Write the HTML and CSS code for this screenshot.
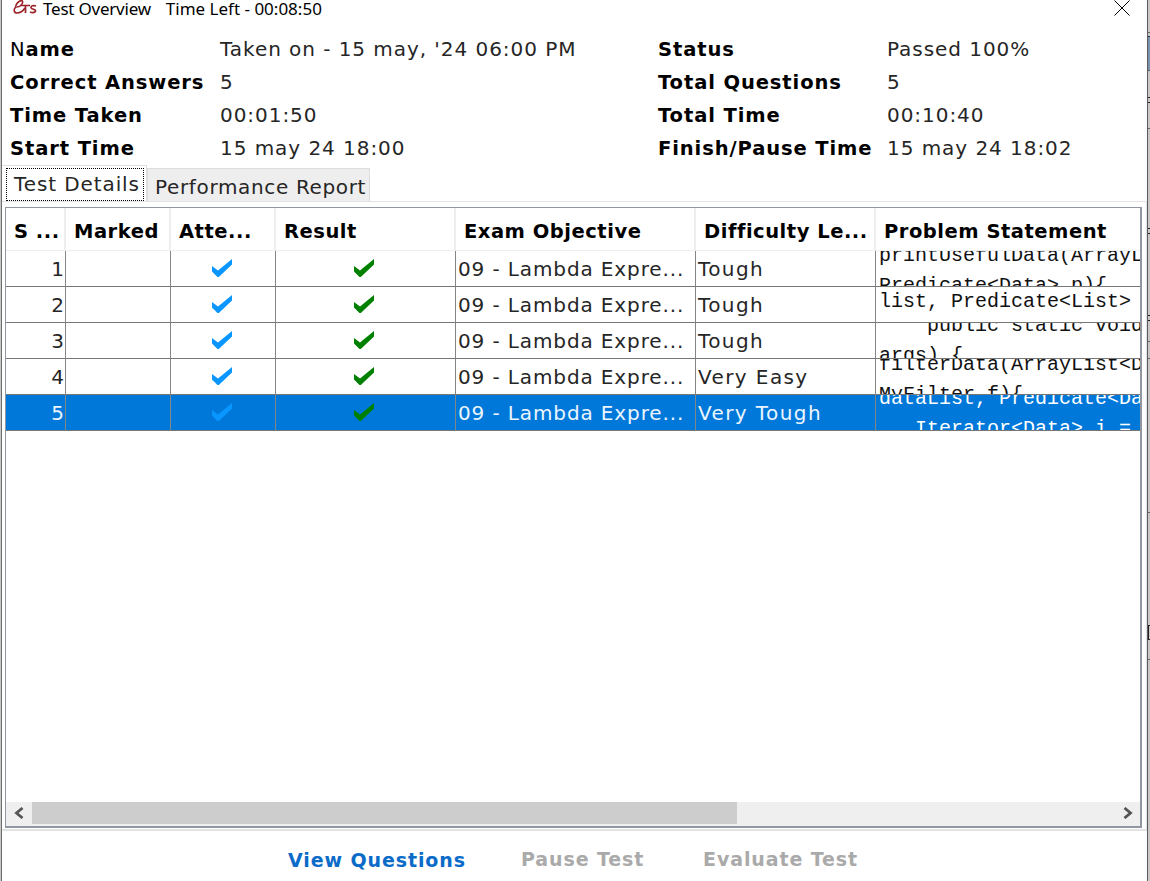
FILE: index.html
```
<!DOCTYPE html>
<html lang="en">
<head>
<meta charset="utf-8">
<title>Test Overview</title>
<link rel="stylesheet" href="styles.css">
</head>
<body>
<svg width="0" height="0" class="defs" aria-hidden="true"><symbol id="check" viewBox="0 0 20 18"><path d="M0 7 6 11.6 20 0V5.6L6.8 18H5.5L0 12.5z"/></symbol></svg>
<div class="desktop">
  <div class="edge left"></div>
  <div class="window">
    <header class="titlebar">
      <svg class="logo" width="24" height="16" viewBox="0 0 24 16" fill="none" stroke="#9b2226"><path stroke-width="1.6" d="M4 7C8 7 11 2 9 .8 6 0 2 5 3 7c-3 2-2 6 1 6 3 0 6-2 8-5"/><path stroke-width="1.7" d="M8 5.5h9M12.5 5.5V13M23 6c-3-1-5 0-5 1.5C18 9.500 23 9 22.500 11 22 13 19 12.800 17 12"/></svg>
      <h1 class="title">Test Overview</h1><span class="timer">Time Left - 00:08:50</span>
      <svg class="close" width="16" height="16" viewBox="0 0 16 16" stroke="#000" fill="none"><path d="M.5.5l15 15M15.500.5l-15 15"/></svg>
    </header>
    <section class="summary">
      <b><span class="thin">N</span>ame</b><span>Taken on - 15 may, '24 06:00 PM</span><b>Status</b><span>Passed 100%</span>
      <b>Correct Answers</b><span>5</span><b>Total Questions</b><span>5</span>
      <b>Time Taken</b><span>00:01:50</span><b>Total Time</b><span>00:10:40</span>
      <b>Start Time</b><span>15 may 24 18:00</span><b>Finish/Pause Time</b><span>15 may 24 18:02</span>
    </section>
    <nav class="tabs"><div class="tab active"><span>Test Details</span></div><div class="tab"><span>Performance Report</span></div></nav>
    <main class="pane">
      <div class="frame">
        <div class="row head"><div>S ...</div><div>Marked</div><div>Atte...</div><div>Result</div><div>Exam Objective</div><div>Difficulty Le...</div><div>Problem Statement</div></div>
        <div class="row"><div class="num">1</div><div></div><div class="mark blue"><svg><use href="#check"/></svg></div><div class="mark green"><svg><use href="#check"/></svg></div><div>09 - Lambda Expre...</div><div class="level">Tough</div><div class="code"><pre class="r1">printUsefulData(ArrayList
Predicate&lt;Data&gt; p){</pre></div></div>
        <div class="row"><div class="num">2</div><div></div><div class="mark blue"><svg><use href="#check"/></svg></div><div class="mark green"><svg><use href="#check"/></svg></div><div>09 - Lambda Expre...</div><div class="level">Tough</div><div class="code"><pre class="r2">list, Predicate&lt;List&gt;</pre></div></div>
        <div class="row"><div class="num">3</div><div></div><div class="mark blue"><svg><use href="#check"/></svg></div><div class="mark green"><svg><use href="#check"/></svg></div><div>09 - Lambda Expre...</div><div class="level">Tough</div><div class="code"><pre class="r3">    public static void
args) {</pre></div></div>
        <div class="row"><div class="num">4</div><div></div><div class="mark blue"><svg><use href="#check"/></svg></div><div class="mark green"><svg><use href="#check"/></svg></div><div>09 - Lambda Expre...</div><div class="level">Very Easy</div><div class="code"><pre class="r4">filterData(ArrayList&lt;Data
MyFilter f){</pre></div></div>
        <div class="row selected"><div class="num">5</div><div></div><div class="mark blue"><svg><use href="#check"/></svg></div><div class="mark green"><svg><use href="#check"/></svg></div><div>09 - Lambda Expre...</div><div class="level">Very Tough</div><div class="code"><pre class="r5">dataList, Predicate&lt;Data&gt;
   Iterator&lt;Data&gt; i =</pre></div></div>
        <div class="empty"></div>
        <div class="scrollbar">
          <div class="arrow"><svg width="10" height="12" viewBox="0 0 10 12"><path d="M8.500 1 2.500 6l6 5"/></svg></div>
          <div class="thumb"></div>
          <div class="arrow end"><svg width="10" height="12" viewBox="0 0 10 12"><path d="M1.500 1l6 5-6 5"/></svg></div>
        </div>
      </div>
    </main>
    <footer class="actions"><span class="view">View Questions</span><span class="pause">Pause Test</span><span>Evaluate Test</span></footer>
  </div>
  <div class="edge right"><i class="line l1"></i><i class="blue-tile"></i><i class="line l2"></i><i class="glyph g1"></i><i class="line l3"></i><i class="glyph g2"></i><i class="glyph g3"></i><i class="line l4"></i><i class="line l5"></i><i class="line l6"></i><i class="box"></i><i class="line l7"></i></div>
</div>
</body>
</html>
```
FILE: styles.css
```
* { box-sizing: border-box; }
body { margin: 0; font: 20px "DejaVu Sans", sans-serif; color: #262626; overflow: hidden; }
.defs { position: absolute; }
.desktop { display: grid; grid-template-columns: 2px 1145px 3px; width: 1150px; height: 881px; overflow: hidden; }
.edge { background: #c8c8c8; }
.left { border-right: 1px solid #6d6d6d; }
.right { position: relative; border-left: 1px solid #5c5c5c; overflow: hidden; }
.right i { position: absolute; left: 0; width: 2px; }
.line { height: 1px; background: #666; }
.l1 { top: 32px; } .l2 { top: 70px; } .l3 { top: 128px; } .l4 { top: 341px; } .l5 { top: 358px; } .l6 { top: 512px; } .l7 { top: 659px; }
.blue-tile { top: 36px; height: 34px; background: #7893ae; border-top: 1px solid #334; }
.glyph { height: 6px; border: solid #222; border-width: 1px 0; }
.g1 { top: 97px; } .g2 { top: 228px; } .g3 { top: 315px; }
.box { top: 625px; height: 15px; border: solid #222; border-width: 1px 0 1px 1px; }
.window { display: flex; flex-direction: column; background: #fff; min-width: 0; height: 881px; }
.titlebar { display: flex; height: 33px; flex: none; padding: 0 17px 0 11px; color: #000; font: 17px/17px "Noto Sans", sans-serif; letter-spacing: -0.22px; }
.logo { flex: none; }
.title { margin: 0 15px 0 6px; font: inherit; white-space: nowrap; }
.timer { white-space: nowrap; letter-spacing: 0; }
.close { margin-left: auto; }
.summary { display: grid; grid-template-columns: 210px 438px 229px 1fr; grid-auto-rows: 33px; height: 132px; flex: none; padding-left: 8px; line-height: 33px; letter-spacing: .95px; white-space: nowrap; }
.summary b { font: 700 19.500px/33px "DejaVu Sans", sans-serif; letter-spacing: .9px; color: #000; }
.summary .thin { font-weight: 400; }
.tabs { display: flex; height: 36px; flex: none; letter-spacing: .65px; white-space: nowrap; }
.tab { align-self: flex-end; height: 33px; padding: 0 3px 0 7px; background: #eee; border: 1px solid #ddd; border-bottom: 0; line-height: 36px; }
.tab.active { height: 36px; width: 145px; padding: 2px 2px 0 4px; background: #fff; border: solid #ddd; border-width: 1px 1px 0 0; letter-spacing: .9px; }
.tab.active span { display: block; width: 138px; height: 33px; padding-left: 7px; border: 1px dotted #000; line-height: 31px; }
.pane { height: 630px; flex: none; padding: 5px 4px 3px 3px; border: solid #e3e3e3; border-width: 1px 1px 2px 0; }
.frame { height: 621px; border: 2px solid #9097a0; border-left-width: 1px; border-top-width: 1px; overflow: hidden; }
.row { display: grid; grid-template-columns: 60px 105px 105px 180px 240px 180px 1fr; height: 36px; line-height: 37px; letter-spacing: .88px; white-space: nowrap; }
.row > div { min-width: 0; overflow: hidden; padding-left: 2px; border-right: 1px solid #858585; border-bottom: 1px solid #777; }
.row > div:last-child { border-right: 0; }
.head { height: 43px; font: 700 19.500px/48px "DejaVu Sans", sans-serif; letter-spacing: .52px; color: #000; }
.row.head > div { padding-left: 8px; border-color: #eee; border-right-width: 2px; }
.row .num { text-align: right; letter-spacing: 0; padding-right: 1px; }
.row .level { letter-spacing: 1.4px; }
.row .mark { padding: 8px 2px 0 0; text-align: center; line-height: 0; }
.mark svg { width: 20px; height: 18px; }
.mark.green svg { margin-left: -1px; }
.blue { fill: #0a96ff; }
.green { fill: #008000; }
.code pre { margin: 0; padding-left: 1px; font: 20px/30px "Liberation Mono", monospace; letter-spacing: 0; color: #111; }
.r1 { transform: translateY(-10px); } .r2 { transform: translateY(0); } .r3 { transform: translateY(-12px); } .r4 { transform: translateY(-9px); } .r5 { transform: translateY(-11px); }
.selected { background: #0078d9; color: #eaf5ff; }
.selected .code pre { color: #fff; }
.empty { height: 371px; }
.scrollbar { display: flex; height: 24px; background: #efefef; }
.arrow { width: 26px; padding: 5px 0 0 8px; line-height: 0; }
.arrow.end { margin-left: auto; padding-left: 9px; }
.arrow path { fill: none; stroke: #555; stroke-width: 2.8; }
.thumb { width: 705px; height: 22px; background: #cdcdcd; }
.actions { display: flex; padding: 10px 0 0 286px; font: 700 19px/36px "DejaVu Sans", sans-serif; letter-spacing: .9px; color: #aaa; white-space: nowrap; }
.view { width: 233px; color: #0a6bc8; line-height: 38px; }
.pause { width: 182px; }
```
